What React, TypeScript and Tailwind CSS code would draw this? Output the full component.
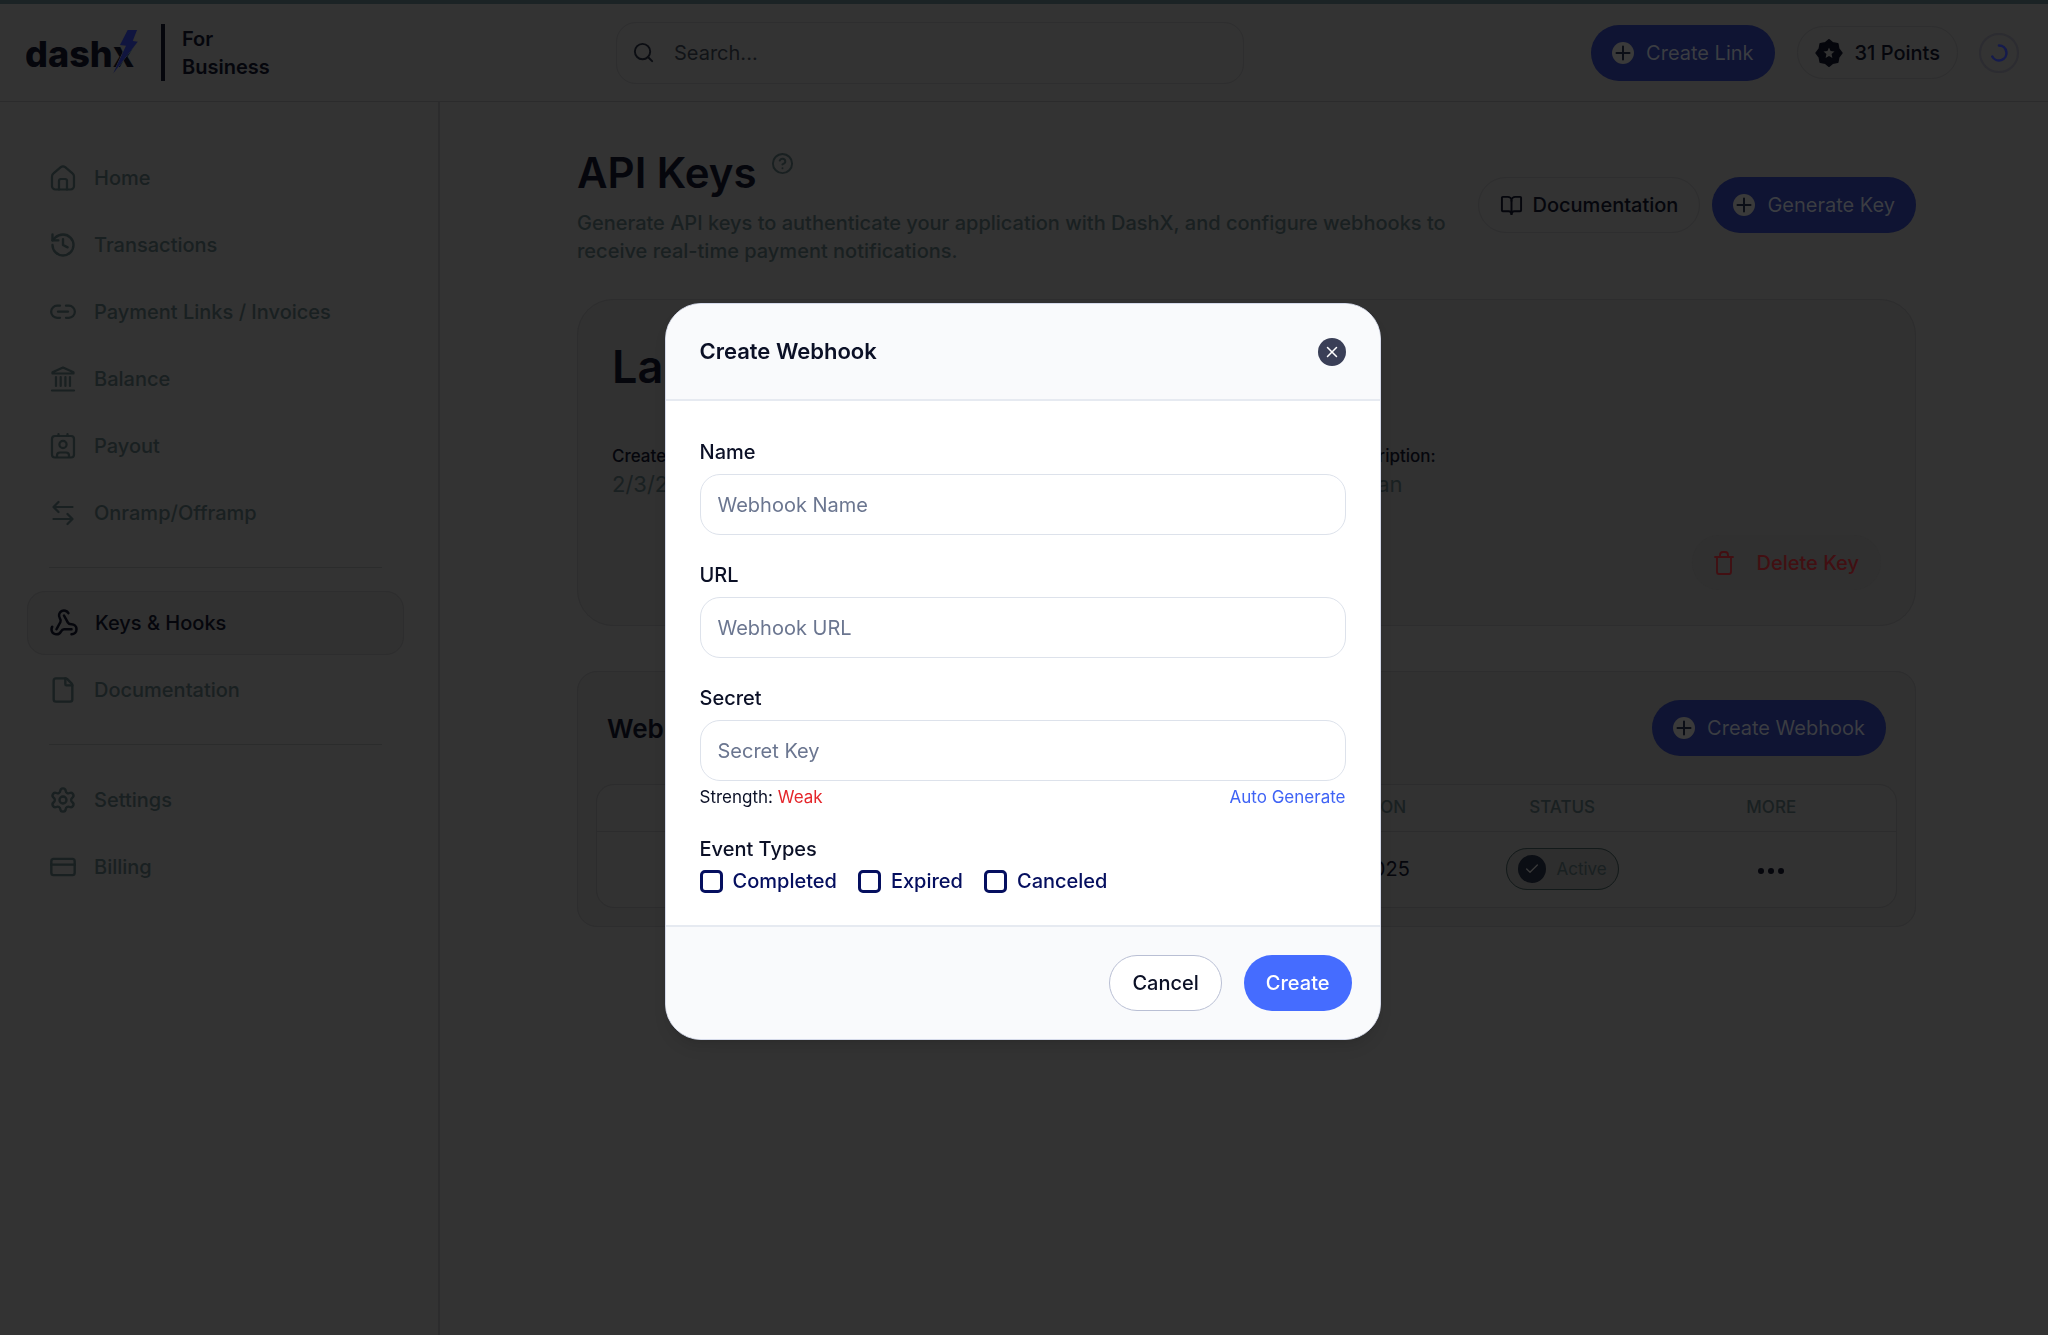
import type { ReactNode } from 'react';
import {
  BookOpen,
  Check,
  CircleHelp,
  CreditCard,
  File,
  History,
  Search,
  Settings,
  Webhook,
  X,
} from 'lucide-react';

const INK = 'text-[#05060c]';

function NavGlyph({ children }: { children: ReactNode }) {
  return (
    <svg
      viewBox="-1 -1 28 28"
      className="size-7 shrink-0"
      fill="none"
      stroke="currentColor"
      strokeWidth="2.2"
      strokeLinecap="round"
      strokeLinejoin="round"
    >
      {children}
    </svg>
  );
}

function LinkIcon() {
  return (
    <NavGlyph>
      <path d="M10 6.700H7.200a6 6 0 0 0 0 12.100H10M16 6.700h2.800a6 6 0 0 1 0 12.100H16M8 12.700h10" />
    </NavGlyph>
  );
}

function BankIcon() {
  return (
    <NavGlyph>
      <path d="M2.500 6.200 13 1.500l10.500 4.700v1.300h-21zM2 24.500h22M6 11v9M10.700 11v9M15.400 11v9M20 11v9" />
    </NavGlyph>
  );
}

function PayoutIcon() {
  return (
    <NavGlyph>
      <rect x="2" y="3" width="22" height="21.500" rx="3" />
      <circle cx="13" cy="11.500" r="3.600" />
      <path d="M8.500 1v2M17.500 1v2M7 24v-1.500a3 3 0 0 1 3-3h6a3 3 0 0 1 3 3V24" />
    </NavGlyph>
  );
}

function SwapIcon() {
  return (
    <NavGlyph>
      <path d="M22.500 7H3.500M8.500 2 3.500 7l5 5M3.500 19h19M17.500 14l5 5-5 5" />
    </NavGlyph>
  );
}

function HomeIcon() {
  return (
    <NavGlyph>
      <path d="M2 11.500c0-1.300.500-2.300 1.500-3.100l7.300-6.200a3.400 3.400 0 0 1 4.400 0l7.300 6.200c1 .800 1.500 1.800 1.500 3.100V21a3.500 3.500 0 0 1-3.500 3.500h-15A3.500 3.500 0 0 1 2 21z" />
      <path d="M9 24.500V16a2 2 0 0 1 2-2h4a2 2 0 0 1 2 2v8.500" />
    </NavGlyph>
  );
}

function TrashIcon() {
  return (
    <svg viewBox="0 0 20 24" className="h-6 w-5" fill="none" stroke="currentColor" strokeWidth="1.800" strokeLinecap="round" strokeLinejoin="round">
      <path d="M1 6h18M3 6v15a2 2 0 0 0 2 2h10a2 2 0 0 0 2-2V6M6 6V4a3 3 0 0 1 3-3h2a3 3 0 0 1 3 3v2" />
    </svg>
  );
}

function PlusBadge() {
  return (
    <svg viewBox="0 0 22 22" className="size-[22px] shrink-0">
      <circle cx="11" cy="11" r="11" className="fill-[#3a3a3a]" />
      <path d="M11 4.500v13M4.500 11h13" className="stroke-[#0b0e16]" strokeWidth="2" strokeLinecap="round" />
    </svg>
  );
}

function PointsBadge() {
  return (
    <svg viewBox="0 0 28 28" className="size-7">
      <path
        d="M14 1l3.600 3 5 .900.900 5L26.700 14l-3.200 4.100-.900 5-5 .900-3.600 3-3.600-3-5-.900-.900-5L1.300 14l3.200-4.100.900-5 5-.900z"
        className="fill-[#05060c] stroke-[#05060c]"
        strokeWidth="2"
        strokeLinejoin="round"
      />
      <path d="M14 8.500l1.600 3.600 3.900.400-2.900 2.600.800 3.900-3.400-2-3.400 2 .800-3.900-2.900-2.600 3.900-.400z" className="fill-[#333333]" />
    </svg>
  );
}

function Logo() {
  return (
    <a href="#" aria-label="dashx" className="flex items-center">
      <svg viewBox="0 0 112 46" className="h-[46px] w-28">
        <text x="-1" y="37" className="fill-[#05060c] font-['Inter'] text-[36px] font-extrabold">
          dashx
        </text>
        <path
          d="M101.700 0H111l-4.300 11 5 .700-24.400 31.600L100 15.700l-6-.700z"
          className="fill-[#10153f] stroke-[#333333]"
          strokeWidth="1"
          paintOrder="stroke"
        />
      </svg>
    </a>
  );
}

function PrimaryButton({ children }: { children: ReactNode }) {
  return (
    <button type="button" className="flex h-14 items-center gap-3 rounded-full bg-[#0f1433] px-[21px] text-[20px] text-[#3b3d42]">
      <PlusBadge />
      {children}
    </button>
  );
}

function NavItem({ icon, label, active = false }: { icon: ReactNode; label: string; active?: boolean }) {
  return (
    <li className="flex h-[67px] items-center">
      <a
        href="#"
        className={
          active
            ? 'flex h-16 w-full items-center gap-4 rounded-[18px] border border-[#2d2d2e] bg-[#313131] px-[21px] text-[#05060c]'
            : 'flex h-16 w-full items-center gap-[17px] border border-transparent px-[21px]'
        }
      >
        {icon}
        {label}
      </a>
    </li>
  );
}

function Field({ id, label, placeholder }: { id: string; label: string; placeholder: string }) {
  return (
    <div>
      <label htmlFor={id} className="mb-2 block text-[20px] leading-7 font-medium">
        {label}
      </label>
      <input
        id={id}
        type="text"
        placeholder={placeholder}
        className="h-[61px] w-full rounded-[20px] border border-[#dde2eb] bg-white px-[17px] text-[20px] text-[#0b1026] outline-none placeholder:text-[#6b7690]"
      />
    </div>
  );
}

function Header() {
  return (
    <header className="flex h-[98px] items-center justify-between border-b border-[#2b2b2c] pr-[29px] pl-[26px]">
      <div className={`flex w-[590px] items-center ${INK}`}>
        <Logo />
        <span className="ml-[23px] h-[57px] w-1 bg-[#05060c]" />
        <p className="ml-[17px] w-24 text-[20px] leading-7 font-semibold">For Business</p>
      </div>
      <div className="flex h-[62px] w-[628px] items-center gap-[19px] rounded-[20px] border border-[#2e2e2f] px-[15px]">
        <Search className="size-[23px] text-[#0b0d12]" strokeWidth={2} />
        <input
          type="search"
          aria-label="Search"
          placeholder="Search..."
          className="flex-1 bg-transparent text-[20px] outline-none placeholder:text-[#111317]"
        />
      </div>
      <div className="flex w-[775px] items-center justify-end">
        <PrimaryButton>Create Link</PrimaryButton>
        <div className={`ml-[22px] flex h-[53px] items-center gap-3 rounded-full border border-[#2e2e2f] px-[17px] text-[20px] font-medium ${INK}`}>
          <PointsBadge />
          31 Points
        </div>
        <button type="button" aria-label="Account" className="ml-[21px] flex size-10 items-center justify-center rounded-full border-2 border-[#2c2c31]">
          <svg viewBox="0 0 18 18" className="size-[18px]" fill="none" strokeWidth="2.500" strokeLinecap="round">
            <path d="M9 1.500a7.500 7.500 0 1 1-6.700 11" className="stroke-[#151b4d]" />
          </svg>
        </button>
      </div>
    </header>
  );
}

function Sidebar() {
  return (
    <nav className="w-[440px] shrink-0 border-r-2 border-[#2c2c2d] pt-[42px] pr-[34px] pl-[27px] text-[20px] font-medium text-[#192021]">
      <ul>
        <NavItem icon={<HomeIcon />} label="Home" />
        <NavItem icon={<History className="size-7" strokeWidth={2} />} label="Transactions" />
        <NavItem icon={<LinkIcon />} label="Payment Links / Invoices" />
        <NavItem icon={<BankIcon />} label="Balance" />
        <NavItem icon={<PayoutIcon />} label="Payout" />
        <NavItem icon={<SwapIcon />} label="Onramp/Offramp" />
      </ul>
      <hr className="mx-[22px] my-[21px] border-[#2b2c2c]" />
      <ul>
        <NavItem active icon={<Webhook className="size-[30px]" strokeWidth={2} />} label="Keys & Hooks" />
        <NavItem icon={<File className="size-7" strokeWidth={2} />} label="Documentation" />
      </ul>
      <hr className="mx-[22px] my-[21px] border-[#2b2c2c]" />
      <ul>
        <NavItem icon={<Settings className="size-7" strokeWidth={2} />} label="Settings" />
        <NavItem icon={<CreditCard className="size-7" strokeWidth={2} />} label="Billing" />
      </ul>
    </nav>
  );
}

function KeyCard() {
  return (
    <section className="mt-[34px] h-[327px] rounded-[36px] border border-[#2d2d2e] bg-[#313131] px-[34px] pt-[39px]">
      <h2 className={`text-[45px] leading-[56px] font-semibold ${INK}`}>Landing</h2>
      <dl className="mt-[49px] grid grid-cols-[4fr_3fr]">
        <div>
          <dt className={`text-[17px] leading-6 font-medium ${INK}`}>Created:</dt>
          <dd className="text-[22px] leading-8 text-[#192021]">2/3/2025</dd>
        </div>
        <div>
          <dt className={`text-[17px] leading-6 font-medium ${INK}`}>Description:</dt>
          <dd className="text-[22px] leading-8 text-[#192021]">Rohan</dd>
        </div>
      </dl>
      <div className="mt-[35px] flex justify-end">
        <button type="button" className="flex h-[55px] items-center gap-[23px] rounded-full bg-[#303030] px-[22px] text-[20px] font-medium text-[#420f12]">
          <TrashIcon />
          Delete Key
        </button>
      </div>
    </section>
  );
}

function WebhooksCard() {
  return (
    <section className="mt-[45px] rounded-[20px] border border-[#2d2d2e] bg-[#313131] px-[18px] pt-7 pb-[18px]">
      <div className="flex items-center justify-between px-[11px]">
        <h2 className={`text-[26px] font-semibold ${INK}`}>Webhooks</h2>
        <PrimaryButton>Create Webhook</PrimaryButton>
      </div>
      <div className="mt-7 overflow-hidden rounded-[18px] border border-[#2c2c2d] bg-[#323232]">
        <table className="w-full table-fixed text-center">
          <colgroup>
            <col className="w-[24%]" />
            <col className="w-[25%]" />
            <col className="w-[18.800%]" />
            <col className="w-[13%]" />
            <col />
          </colgroup>
          <thead>
            <tr className="h-[46px] border-b border-[#2c2c2d] text-[17px] text-[#192021]">
              <th className="font-medium">NAME</th>
              <th className="font-medium">URL</th>
              <th className="font-medium">EXPIRATION</th>
              <th className="font-medium">STATUS</th>
              <th className="font-medium">MORE</th>
            </tr>
          </thead>
          <tbody>
            <tr className={`h-[76px] text-[20px] ${INK}`}>
              <td>Webhook</td>
              <td>https://</td>
              <td>12/23/2025</td>
              <td>
                <span className="inline-flex h-[42px] items-center gap-[11px] rounded-full border border-[#131a1a] bg-[#2e2e2e] px-[11px] align-middle text-[17px] text-[#192021]">
                  <span className="flex size-7 items-center justify-center rounded-full bg-[#0b0e14] text-[#3a3a3a]">
                    <Check className="size-4" strokeWidth={2} />
                  </span>
                  Active
                </span>
              </td>
              <td>
                <button type="button" aria-label="More" className="inline-flex gap-1 align-middle">
                  <span className="size-[6px] rounded-full bg-[#05060c]" />
                  <span className="size-[6px] rounded-full bg-[#05060c]" />
                  <span className="size-[6px] rounded-full bg-[#05060c]" />
                </button>
              </td>
            </tr>
          </tbody>
        </table>
      </div>
    </section>
  );
}

function CreateWebhookModal() {
  return (
    <div
      role="dialog"
      aria-modal="true"
      aria-labelledby="modal-title"
      className="w-[716px] overflow-hidden rounded-[36px] border border-[#d5daea] bg-white text-[#0b1026] shadow-lg"
    >
      <div className="flex h-[97px] items-center justify-between border-b-2 border-[#e6eaf1] bg-[#f9fafc] px-[34px]">
        <h2 id="modal-title" className="text-[22px] font-semibold">
          Create Webhook
        </h2>
        <button type="button" aria-label="Close" className="flex size-7 items-center justify-center rounded-full bg-[#3a3f57] text-white">
          <X className="size-[18px]" strokeWidth={2} />
        </button>
      </div>
      <form>
        <div className="px-[34px] pt-[37px] pb-[30px]">
          <div className="space-y-[26px]">
            <Field id="name" label="Name" placeholder="Webhook Name" />
            <Field id="url" label="URL" placeholder="Webhook URL" />
            <Field id="secret" label="Secret" placeholder="Secret Key" />
          </div>
          <div className="mt-1 flex justify-between text-[17px] leading-6">
            <p>
              Strength: <span className="text-[#e5252a]">Weak</span>
            </p>
            <button type="button" className="text-[#3f63f5]">
              Auto Generate
            </button>
          </div>
          <fieldset className="mt-[26px]">
            <legend className="text-[20px] leading-7 font-medium">Event Types</legend>
            <div className="mt-1 flex gap-[21px] text-[20px] leading-7 font-medium text-[#050f5f]">
              {['Completed', 'Expired', 'Canceled'].map(type => (
                <label key={type} className="flex items-center gap-2.5">
                  <input type="checkbox" className="size-[23px] appearance-none rounded-[5px] border-3 border-[#050f5f] bg-white" />
                  {type}
                </label>
              ))}
            </div>
          </fieldset>
        </div>
        <div className="flex h-[114px] items-center justify-end gap-[22px] border-t-2 border-[#e6eaf1] bg-[#f9fafc] px-7 text-[20px] font-medium">
          <button type="button" className="h-14 rounded-full border border-[#b9bfd4] bg-white px-[22px]">
            Cancel
          </button>
          <button type="submit" className="h-14 rounded-full bg-[#456cff] px-[22px] text-white">
            Create
          </button>
        </div>
      </form>
    </div>
  );
}

export default function App() {
  return (
    <div className="flex min-h-screen flex-col border-t-4 border-[#1b2325] bg-[#333333] font-['Inter',sans-serif]">
      <Header />
      <div className="flex flex-1">
        <Sidebar />
        <main className="min-w-0 flex-1 pt-[43px] pr-[132px] pl-[137px]">
          <div className="flex items-center justify-between">
            <div className="w-[880px]">
              <div className="flex gap-[14px]">
                <h1 className={`text-[42px] leading-[56px] font-semibold ${INK}`}>API Keys</h1>
                <CircleHelp className="mt-[7px] size-[23px] text-[#192021]" strokeWidth={2} />
              </div>
              <p className="mt-2 text-[20px] leading-7 font-medium text-[#192021]">
                Generate API keys to authenticate your application with DashX, and configure webhooks to receive real-time payment notifications.
              </p>
            </div>
            <div className="flex gap-3">
              <a href="#" className={`flex h-14 items-center gap-2.5 rounded-full border border-[#2e2e2f] px-[21px] text-[20px] font-medium ${INK}`}>
                <BookOpen className="size-[23px]" strokeWidth={2} />
                Documentation
              </a>
              <PrimaryButton>Generate Key</PrimaryButton>
            </div>
          </div>
          <KeyCard />
          <WebhooksCard />
        </main>
      </div>
      <div className="fixed inset-0 flex items-center justify-center pt-2 pr-[3px]">
        <CreateWebhookModal />
      </div>
    </div>
  );
}
